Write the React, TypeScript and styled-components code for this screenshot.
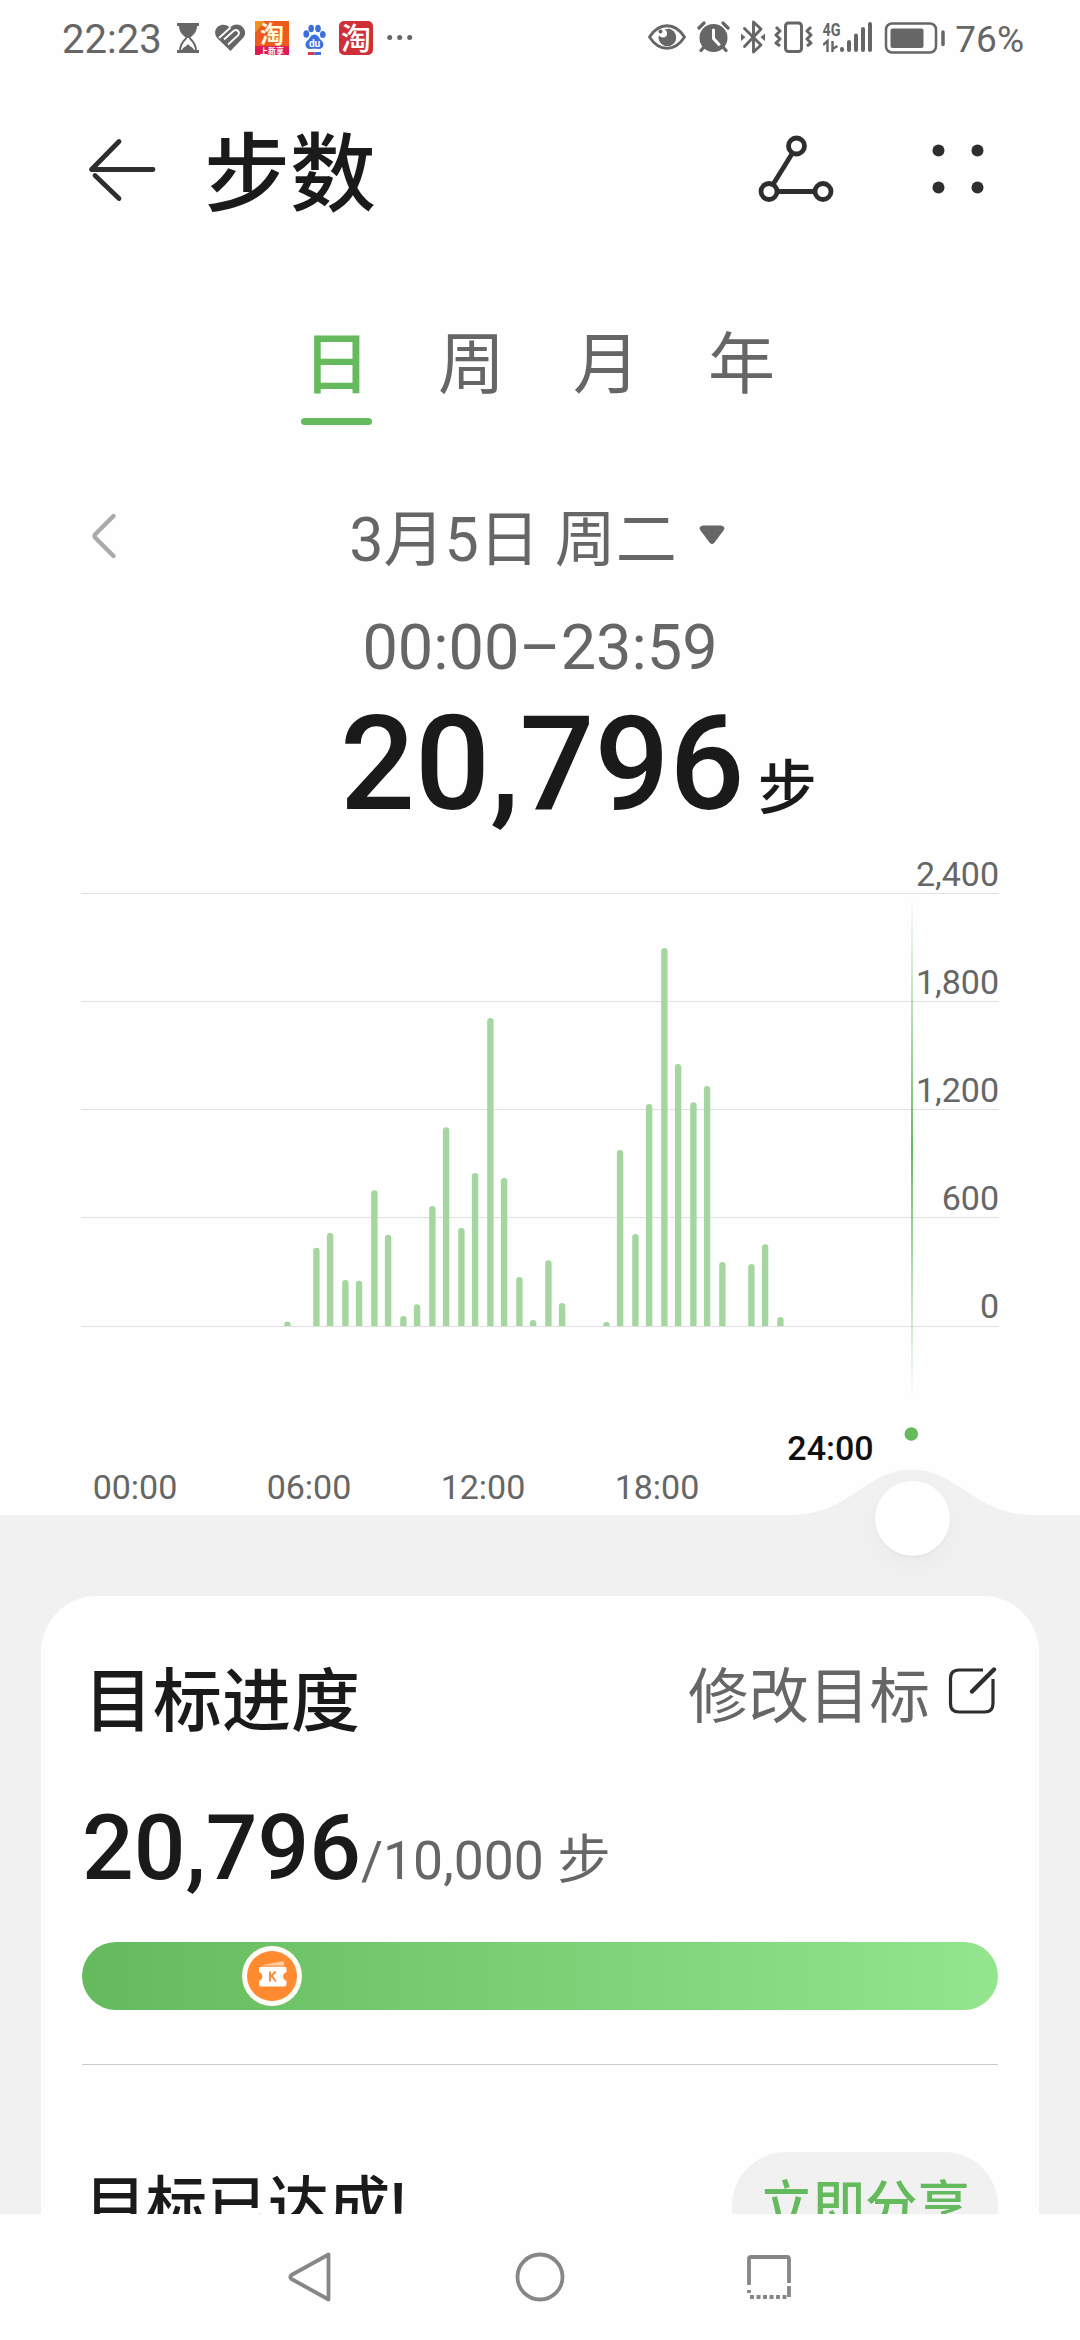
import React from "react";
import styled, { createGlobalStyle } from "styled-components";

const GREEN = "#65ba5d";
const INK = "#1a1a1a";
const GREY = "#666666";
const FONT = `Roboto, "Noto Sans CJK SC", sans-serif`;

const GlobalStyle = createGlobalStyle`
  * { box-sizing: border-box; }
  body { margin: 0; background: #fff; font-family: ${FONT}; }
`;

const Screen = styled.div`
  width: 1080px;
  height: 2340px;
  display: flex;
  flex-direction: column;
  overflow: hidden;
  background: #fefefe;
  color: ${INK};
`;

const StatusBar = styled.div`
  height: 76px;
  flex: none;
  display: flex;
  justify-content: space-between;
  padding: 0 56px 0 62px;
  color: ${GREY};
`;

const StatusGroup = styled.div`
  display: flex;
  align-items: center;
`;

const StatusText = styled.span<{ $size: number; $gap?: number }>`
  margin-left: ${(p) => p.$gap ?? 0}px;
  font-size: ${(p) => p.$size}px;
  line-height: 76px;
  padding-top: 3px;
`;

const StatusIcon = styled.svg<{ $gap: number }>`
  height: 76px;
  flex: none;
  margin-left: ${(p) => p.$gap}px;
`;

const Header = styled.header`
  height: 120px;
  flex: none;
  margin-top: 34px;
  padding: 0 95px 0 88px;
  display: flex;
  align-items: center;
`;

const Title = styled.h1`
  flex: 1;
  margin: 0 0 0 48px;
  padding-top: 12px;
  font-size: 86px;
  line-height: 120px;
  font-weight: 500;
`;

const HeaderActions = styled.div`
  display: flex;
  align-items: center;
  gap: 97px;
`;

const Tabs = styled.nav`
  flex: none;
  margin-top: 84px;
  margin-left: -2px;
  display: flex;
  justify-content: center;
  gap: 64px;
`;

const Tab = styled.div<{ $active?: boolean }>`
  width: 71px;
  height: 111px;
  padding-top: 3px;
  text-align: center;
  font-size: 67px;
  line-height: 96px;
  font-weight: ${(p) => (p.$active ? 500 : 400)};
  color: ${(p) => (p.$active ? GREEN : GREY)};
  display: flex;
  flex-direction: column;
  justify-content: space-between;

  &::after {
    content: "";
    height: 7px;
    border-radius: 3.5px;
    background: ${(p) => (p.$active ? GREEN : "transparent")};
  }
`;

const DateRow = styled.div`
  flex: none;
  height: 90px;
  margin-top: 70px;
  padding: 0 88px;
  display: grid;
  grid-template-columns: 40px 1fr 40px;
  align-items: center;
`;

const PrevIcon = styled.svg`
  margin-top: -8px;
`;

const DateLabel = styled.div`
  display: flex;
  align-items: center;
  justify-content: center;
  gap: 22px;
  margin-left: -6px;
  font-size: 61px;
  line-height: 90px;
  color: ${GREY};

  svg { margin-top: -10px; }
`;

const TimeRange = styled.div`
  flex: none;
  height: 80px;
  margin-top: 23px;
  text-align: center;
  font-size: 63px;
  line-height: 80px;
  color: ${GREY};
`;

const Total = styled.div`
  flex: none;
  height: 140px;
  margin: 6px 0;
  padding-left: 340px;
  display: flex;
  align-items: baseline;
  font-weight: 500;
`;

const TotalValue = styled.span`
  font-size: 132px;
  line-height: 140px;
`;

const TotalUnit = styled.span`
  margin-left: 13px;
  font-size: 59px;
`;

const ChartArea = styled.div`
  position: relative;
  flex: none;
  height: 675px;
`;

const Knob = styled.div`
  position: absolute;
  left: 875px;
  top: 641px;
  width: 75px;
  height: 75px;
  border-radius: 50%;
  background: #fff;
  box-shadow: 0 1px 2px rgba(0, 0, 0, 0.06), 0 10px 24px rgba(0, 0, 0, 0.03);
`;

const ChartSvg = styled.svg`
  display: block;
  font-family: ${FONT};
`;

const Lower = styled.section`
  flex: 1;
  min-height: 0;
  overflow: hidden;
  padding: 81px 41px 0;
  background: #f1f1f1;
`;

const Card = styled.div`
  height: 760px;
  padding: 60px 41px 0;
  border-radius: 56px;
  background: #fefefe;
`;

const CardHead = styled.div`
  height: 90px;
  display: flex;
  align-items: center;
  justify-content: space-between;
`;

const CardTitle = styled.h2`
  margin: 0 0 0 2px;
  padding-top: 4px;
  font-size: 69px;
  line-height: 90px;
  font-weight: 500;
`;

const EditGoal = styled.div`
  display: flex;
  align-items: center;
  gap: 17px;
  margin: -6px 1px 0 0;
  font-size: 60.5px;
  line-height: 84px;
  color: ${GREY};

  svg { margin-top: -15px; }
`;

const GoalRow = styled.div`
  height: 100px;
  margin-top: 52px;
  display: flex;
  align-items: baseline;
  font-size: 53.5px;
  color: ${GREY};
`;

const GoalValue = styled.span`
  font-size: 91px;
  line-height: 100px;
  font-weight: 500;
  color: ${INK};
`;

const Progress = styled.div`
  height: 68px;
  margin-top: 44px;
  padding-left: 160px;
  display: flex;
  align-items: center;
  border-radius: 34px;
  background: linear-gradient(90deg, ${GREEN}, #93e58e);
`;

const Divider = styled.div`
  height: 1px;
  margin-top: 54px;
  background: #c8c8c8;
`;

const ShareRow = styled.div`
  margin-top: 87px;
  display: flex;
  align-items: center;
  justify-content: space-between;
`;

const ShareText = styled.div`
  margin-left: 3px;
  font-size: 61px;
  line-height: 100px;
  font-weight: 500;
`;

const ShareButton = styled.button`
  width: 266px;
  height: 108px;
  padding: 0;
  border: 0;
  border-radius: 54px;
  background: #f1f1f1;
  color: ${GREEN};
  font: 500 52.5px/100px ${FONT};
`;

const NavBar = styled.footer`
  height: 126px;
  flex: none;
  padding-left: 285px;
  display: flex;
  align-items: center;
  background: #fefefe;
`;

const NavIcon = styled.svg<{ $gap?: number }>`
  flex: none;
  margin-left: ${(p) => p.$gap ?? 0}px;
`;

/* Steps per quarter hour, starting with the first non-empty slot. */
const STEPS = [
  25, 0, 434, 515, 255, 251, 752, 506, 55, 120, 665, 1101, 543, 848, 1707, 820,
  272, 33, 364, 127, 0, 0, 22, 975, 510, 1230, 2095, 1452, 1240, 1330, 355, 0,
  344, 453, 50,
];
const BASE_Y = 486;
const slotX = (i: number) => 284.2 + Math.floor(i / 2) * 29 + (i % 2) * 13.7;

function StepChart() {
  return (
    <ChartSvg width="1080" height="676" viewBox="0 0 1080 676">
      <defs>
        <linearGradient id="cursor" x1="0" y1="0" x2="0" y2="1">
          <stop offset="0" stopColor={GREEN} stopOpacity="0" />
          <stop offset="0.5" stopColor={GREEN} />
          <stop offset="1" stopColor={GREEN} stopOpacity="0" />
        </linearGradient>
      </defs>
      {[2400, 1800, 1200, 600, 0].map((v, i) => (
        <g key={v}>
          <rect x="81" y={[53, 161, 269, 377, 486][i]} width="918" height="1" fill="#e0e0e0" />
          <text x="999" y={46 + i * 108} fontSize="34" textAnchor="end" fill={GREY}>
            {v.toLocaleString("en-US")}
          </text>
        </g>
      ))}
      {STEPS.map((v, i) => {
        if (!v) return null;
        const h = (v / 2400) * 433;
        const x = slotX(i);
        const top = BASE_Y - h;
        const r = Math.min(3.2, h);
        return (
          <path
            key={i}
            fill="#a5d6a0"
            d={`M${x} ${BASE_Y}V${top + r}a3.2 ${r} 0 0 1 6.4 0V${BASE_Y}z`}
          />
        );
      })}
      <rect x="911" y="55" width="2" height="505" fill="url(#cursor)" />
      <circle cx="911.3" cy="594" r="6.8" fill={GREEN} />
      {["00:00", "06:00", "12:00", "18:00"].map((t, i) => (
        <text key={t} x={135 + i * 174} y="659" fontSize="34" textAnchor="middle" fill={GREY}>
          {t}
        </text>
      ))}
      <text x="830.5" y="620" fontSize="34" fontWeight="500" textAnchor="middle" fill="#111">
        24:00
      </text>
      <path
        d="M790 675C850 675 866 629.5 912 629.5S974 675 1034 675V676H790z"
        fill="#f1f1f1"
      />
    </ChartSvg>
  );
}

function LeftStatusIcons() {
  return (
    <>
      <StatusIcon $gap={14} width="24" viewBox="0 0 24 76">
        <path d="M1 23h22v3H1zM1 50h22v3H1z" fill={GREY} />
        <path d="M3 26h18c0 6-4 9-7 12h-4c-3-3-7-6-7-12z" fill={GREY} />
        <path d="M10.500 38C6 42 4 45 4 51M13.500 38C18 42 20 45 20 51" fill="none" stroke={GREY} strokeWidth="2" />
        <path d="M6 50c1-3 4-3 6-6 2 3 5 3 6 6z" fill={GREY} />
      </StatusIcon>
      <StatusIcon $gap={15} width="32" viewBox="0 0 32 76">
        <path
          d="M15.500 51L2.500 38.500C-1 35-.500 29 3 26.500c4-3 9-2 12 1 3.500-3.500 9-4 12.500-.500 3.500 3.500 3.500 8 0 11.500z"
          fill={GREY}
        />
        <path d="M4 38L15.500 27.500" stroke="#fefefe" strokeWidth="1.800" />
        <path d="M9 39.500L18.500 31q2.500-2 4.500 0t0 4.500L13 44.500" fill="none" stroke="#fefefe" strokeWidth="1.800" />
      </StatusIcon>
      <StatusIcon $gap={8} width="34" viewBox="0 0 34 76">
        <rect y="21" width="34" height="34" fill="#ee5a1c" />
        <path d="M0 21h10l-10 12z" fill="#f0941f" />
        <rect y="46" width="34" height="9" fill="#e01a55" />
        <text x="17" y="43" fontSize="24" fontWeight="700" textAnchor="middle" fill="#fff8dc">淘</text>
        <text x="17" y="53.500" fontSize="8" fontWeight="700" textAnchor="middle" fill="#fff">上新享</text>
      </StatusIcon>
      <StatusIcon $gap={14} width="23" viewBox="0 0 23 76">
        <g fill="#3a6fe0">
          <ellipse cx="3.300" cy="34" rx="2.900" ry="3.800" />
          <ellipse cx="8.200" cy="28.500" rx="2.800" ry="3.800" />
          <ellipse cx="15" cy="28.500" rx="2.800" ry="3.800" />
          <ellipse cx="19.800" cy="34.500" rx="2.800" ry="3.600" />
          <path d="M11.500 34.500c4 0 4.500 4 7 6 4 4 1 9-3 8.500-3-.5-5-.5-8 0C3 49.500.500 44 4.500 40.500c2.500-2 3-6 7-6z" />
        </g>
        <text x="11.500" y="47" fontSize="10" fontWeight="700" textAnchor="middle" fill="#fff">du</text>
        <path d="M5 52h6.500v3H5z" fill="#d03c4a" />
        <path d="M11.500 52H18v3h-6.500z" fill="#3a6fe0" />
      </StatusIcon>
      <StatusIcon $gap={13} width="34" viewBox="0 0 34 76">
        <rect y="21" width="34" height="34" rx="5" fill="#cf2f36" />
        <text x="17" y="49" fontSize="30" fontWeight="500" textAnchor="middle" fill="#fff">淘</text>
      </StatusIcon>
      <StatusIcon $gap={13} width="28" viewBox="0 0 28 76" fill={GREY}>
        <circle cx="3.700" cy="37.500" r="2.500" />
        <circle cx="13.700" cy="37.500" r="2.500" />
        <circle cx="23.700" cy="37.500" r="2.500" />
      </StatusIcon>
    </>
  );
}

function RightStatusIcons() {
  return (
    <>
      <StatusIcon $gap={0} width="38" viewBox="0 0 38 76">
        <path d="M1.500 37C11 22 27 22 36.500 37 27 52 11 52 1.500 37z" fill="none" stroke={GREY} strokeWidth="2.800" />
        <path d="M20 28.500A8.800 8.800 0 1 1 10.500 36l3.500 2a4.500 4.500 0 0 0 5-7z" fill={GREY} />
        <circle cx="19.500" cy="37.500" r="8.600" fill={GREY} />
        <circle cx="15" cy="33.500" r="4" fill="#fefefe" />
        <circle cx="12.500" cy="31.500" r="2" fill={GREY} />
      </StatusIcon>
      <StatusIcon $gap={11} width="33" viewBox="0 0 33 76">
        <circle cx="16.500" cy="38" r="14" fill={GREY} />
        <path d="M2 28l5-5M31 28l-5-5M7 47l-3 3.500M26 47l3 3.500" stroke={GREY} strokeWidth="3.200" strokeLinecap="round" />
        <path d="M16.500 30v8.500l5.500 6" fill="none" stroke="#fff" strokeWidth="3" strokeLinecap="round" strokeLinejoin="round" />
      </StatusIcon>
      <StatusIcon $gap={11} width="24" viewBox="0 0 24 76">
        <path d="M3.500 28.500L20 45l-7.500 7V22l7.500 7L3.500 46.500" fill="none" stroke={GREY} strokeWidth="2.900" strokeLinejoin="round" strokeLinecap="round" />
        <path d="M0 33.500l4.500 3.800L0 41zM24 33.500l-4.500 3.800L24 41z" fill={GREY} />
      </StatusIcon>
      <StatusIcon $gap={9} width="39" viewBox="0 0 39 76">
        <rect x="11.500" y="23" width="16" height="28.500" rx="3" fill="none" stroke={GREY} strokeWidth="3" />
        <path d="M2 27l4 4-4 4 4 4-4 4 4 3M37 27l-4 4 4 4-4 4 4 4-4 3" fill="none" stroke={GREY} strokeWidth="3" strokeLinejoin="round" />
      </StatusIcon>
      <StatusIcon $gap={10} width="50" viewBox="0 0 50 76">
        <text x="-0.500" y="36" fontSize="18.500" fontWeight="700" fill={GREY} textLength="18" lengthAdjust="spacingAndGlyphs">4G</text>
        <path d="M0 45l4.500-4v11M9.500 41v11M9.500 49l5-3" fill="none" stroke={GREY} strokeWidth="2.400" />
        <g stroke={GREY} strokeWidth="4" strokeLinecap="round">
          <path d="M19 49v1M26 42v8M33 35.500V50M40 29v21M47 24v26" />
        </g>
      </StatusIcon>
      <StatusIcon $gap={11} width="62" viewBox="0 0 62 76">
        <rect x="2" y="23.500" width="50" height="29" rx="6" fill="none" stroke={GREY} strokeWidth="2.500" />
        <rect x="6.500" y="28.500" width="33" height="19.500" rx="2" fill={GREY} />
        <path d="M59 32v12.500" stroke={GREY} strokeWidth="3.500" strokeLinecap="round" />
      </StatusIcon>
    </>
  );
}

function TicketBadge() {
  return (
    <svg width="60" height="60" viewBox="0 0 60 60">
      <circle cx="30" cy="30" r="30" fill="#fffdf5" />
      <circle cx="30" cy="30" r="25" fill="#ff8a30" />
      <path d="M18.500 19.500L40 15.300c1.400-.2 2 .6 2 1.700v2.500z" fill="#ffcfa0" />
      <path d="M19 20.800h23.500a2 2 0 0 1 2 2v3.500a4.300 4.300 0 0 0 0 8.400v3.800a2 2 0 0 1-2 2H19a2 2 0 0 1-2-2v-3.800a4.300 4.300 0 0 0 0-8.400v-3.500a2 2 0 0 1 2-2z" fill="#fff" />
      <path d="M28 25.500v10M33.700 25.500L28.500 31M30 30l4 5.500" fill="none" stroke="#f58a3a" strokeWidth="1.900" />
    </svg>
  );
}

export default function App() {
  return (
    <Screen>
      <GlobalStyle />
      <StatusBar>
        <StatusGroup>
          <StatusText $size={40}>22:23</StatusText>
          <LeftStatusIcons />
        </StatusGroup>
        <StatusGroup>
          <RightStatusIcons />
          <StatusText $size={37} $gap={9}>76%</StatusText>
        </StatusGroup>
      </StatusBar>

      <Header>
        <svg width="68" height="64" viewBox="0 0 68 64" fill="none" stroke="#2e2e2e" strokeWidth="4.800" strokeLinecap="round" strokeLinejoin="round">
          <path d="M31 3.500L3.500 31.500H65M7 37.500L31 60.500" />
        </svg>
        <Title>步数</Title>
        <HeaderActions>
          <svg width="76" height="70" viewBox="0 0 76 70" fill="none" stroke="#2e2e2e" strokeWidth="4.800">
            <circle cx="38.500" cy="11" r="8" />
            <circle cx="11" cy="56.500" r="8" />
            <circle cx="65" cy="56.500" r="8" />
            <path d="M34.500 18L15 49.500M19 56.500h38" />
          </svg>
          <svg width="54" height="52" viewBox="0 0 54 52" fill="#2e2e2e">
            <circle cx="7.500" cy="6.500" r="6" />
            <circle cx="46.500" cy="6.500" r="6" />
            <circle cx="7.500" cy="43.500" r="6" />
            <circle cx="46.500" cy="43.500" r="6" />
          </svg>
        </HeaderActions>
      </Header>

      <Tabs>
        <Tab $active>日</Tab>
        <Tab>周</Tab>
        <Tab>月</Tab>
        <Tab>年</Tab>
      </Tabs>

      <DateRow>
        <PrevIcon width="30" height="46" viewBox="0 0 30 46" fill="none" stroke="#aaaaaa" strokeWidth="4.400" strokeLinecap="round" strokeLinejoin="round">
          <path d="M25.500 3L7.500 21q-2 2 0 4L25.500 43" />
        </PrevIcon>
        <DateLabel>
          3月5日 周二
          <svg width="26" height="20" viewBox="0 0 26 20" fill={GREY}>
            <path d="M4 0.500h18q5 1 2.500 5L15.500 17.500q-2.500 3-5 0L1.500 5.500Q-1 1.500 4 0.500z" />
          </svg>
        </DateLabel>
      </DateRow>
      <TimeRange>00:00–23:59</TimeRange>
      <Total>
        <TotalValue>20,796</TotalValue>
        <TotalUnit>步</TotalUnit>
      </Total>

      <ChartArea>
        <StepChart />
        <Knob />
      </ChartArea>

      <Lower>
        <Card>
          <CardHead>
            <CardTitle>目标进度</CardTitle>
            <EditGoal>
              修改目标
              <svg width="50" height="50" viewBox="0 0 50 50" fill="none" stroke="#2e2e2e" strokeWidth="3.200" strokeLinecap="round">
                <path d="M36 4H12q-8.500 0-8.500 8.500v25Q3.500 46 12 46h25.500q8.500 0 8.500-8.500V13" strokeLinecap="butt" />
                <path d="M25 25.500L47 3.500" strokeWidth="4.400" />
              </svg>
            </EditGoal>
          </CardHead>
          <GoalRow>
            <GoalValue>20,796</GoalValue>
            /10,000 步
          </GoalRow>
          <Progress>
            <TicketBadge />
          </Progress>
          <Divider />
          <ShareRow>
            <ShareText>目标已达成!</ShareText>
            <ShareButton>立即分享</ShareButton>
          </ShareRow>
        </Card>
      </Lower>

      <NavBar>
        <NavIcon width="50" height="54" viewBox="0 0 50 54" fill="none" stroke="#878787" strokeWidth="3.800" strokeLinejoin="round">
          <path d="M43.500 4.500V49.500L6.500 29q-2.500-2 0-4z" />
        </NavIcon>
        <NavIcon $gap={180} width="50" height="50" viewBox="0 0 50 50" fill="none" stroke="#878787" strokeWidth="3.800">
          <circle cx="25" cy="25" r="22.500" />
        </NavIcon>
        <NavIcon $gap={180} width="48" height="48" viewBox="0 0 48 48" fill="none" stroke="#878787" strokeWidth="3.800">
          <path d="M4 32V6q0-2 2-2H42q2 0 2 2V30M44 33v11M4 37v3" />
          <path d="M5 44H44" strokeDasharray="4 2.500" />
        </NavIcon>
      </NavBar>
    </Screen>
  );
}
